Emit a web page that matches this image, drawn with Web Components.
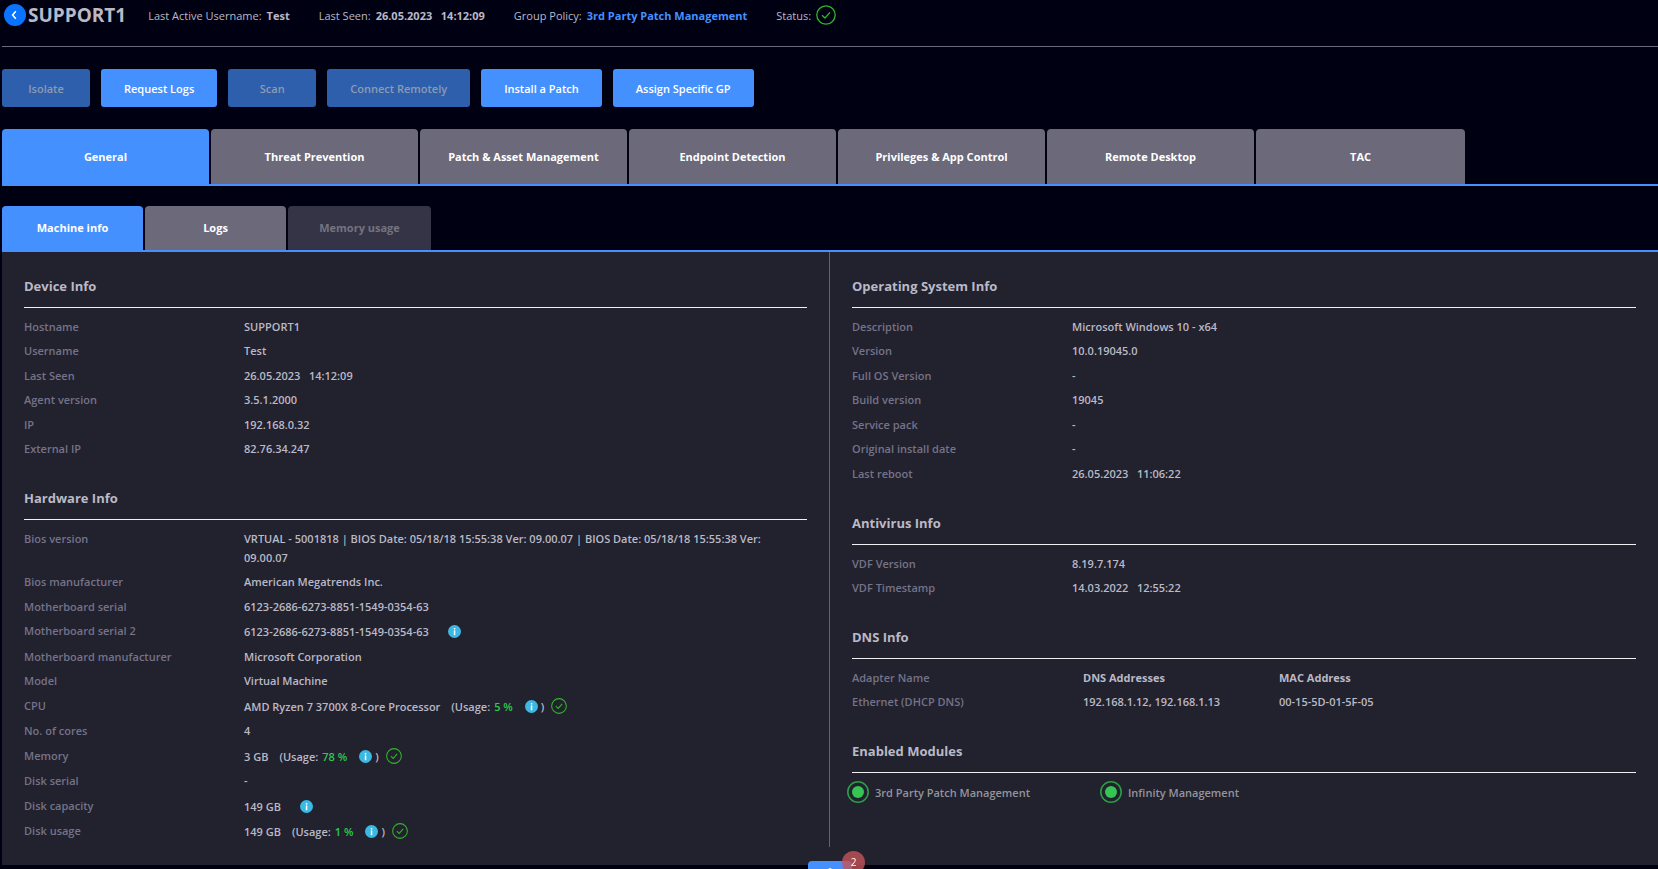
<!DOCTYPE html>
<html lang="en">
<head>
<meta charset="utf-8">
<title>SUPPORT1 - Machine info</title>
<style>
  body {
    margin: 0;
    background: #000013;
    color: #bab9c6;
    font: 11px/19px "Open Sans", "Noto Sans", sans-serif;
    --blue: #4590ff;
    --green: #2fc84f;
    --muted: #757388;
    --panel: #22212e;
    --tab: #6b697a;
  }
  a { color: var(--blue); font-weight: 700; text-decoration: none; }
</style>
</head>
<body>
<device-page>
  <device-header slot="header" name="SUPPORT1">
    <header-fact label="Last Active Username:">Test</header-fact>
    <header-fact label="Last Seen:">26.05.2023&nbsp; &nbsp;14:12:09</header-fact>
    <header-fact label="Group Policy:"><a href="#policy">3rd Party Patch Management</a></header-fact>
    <header-fact label="Status:"><check-icon size="20"></check-icon></header-fact>
  </device-header>

  <action-bar slot="actions">
    <action-button disabled>Isolate</action-button>
    <action-button>Request Logs</action-button>
    <action-button disabled>Scan</action-button>
    <action-button disabled>Connect Remotely</action-button>
    <action-button>Install a Patch</action-button>
    <action-button>Assign Specific GP</action-button>
  </action-bar>

  <tab-strip slot="tabs" label="Device sections" large>
    <tab-item large selected>General</tab-item>
    <tab-item large>Threat Prevention</tab-item>
    <tab-item large>Patch &amp; Asset Management</tab-item>
    <tab-item large>Endpoint Detection</tab-item>
    <tab-item large>Privileges &amp; App Control</tab-item>
    <tab-item large>Remote Desktop</tab-item>
    <tab-item large>TAC</tab-item>
  </tab-strip>

  <tab-strip slot="subtabs" label="General sections">
    <tab-item selected>Machine info</tab-item>
    <tab-item>Logs</tab-item>
    <tab-item disabled>Memory usage</tab-item>
  </tab-strip>

  <info-section slot="left" heading="Device Info">
    <info-row label="Hostname">SUPPORT1</info-row>
    <info-row label="Username">Test</info-row>
    <info-row label="Last Seen">26.05.2023&nbsp; &nbsp;14:12:09</info-row>
    <info-row label="Agent version">3.5.1.2000</info-row>
    <info-row label="IP">192.168.0.32</info-row>
    <info-row label="External IP">82.76.34.247</info-row>
  </info-section>
  <info-section slot="left" heading="Hardware Info">
    <info-row label="Bios version">VRTUAL - 5001818 | BIOS Date: 05/18/18 15:55:38 Ver: 09.00.07 | BIOS Date: 05/18/18 15:55:38 Ver: 09.00.07</info-row>
    <info-row label="Bios manufacturer">American Megatrends Inc.</info-row>
    <info-row label="Motherboard serial">6123-2686-6273-8851-1549-0354-63</info-row>
    <info-row label="Motherboard serial 2">6123-2686-6273-8851-1549-0354-63<info-icon slot="extra"></info-icon></info-row>
    <info-row label="Motherboard manufacturer">Microsoft Corporation</info-row>
    <info-row label="Model">Virtual Machine</info-row>
    <info-row label="CPU">AMD Ryzen 7 3700X 8-Core Processor<usage-note slot="extra">5 %</usage-note></info-row>
    <info-row label="No. of cores">4</info-row>
    <info-row label="Memory">3 GB<usage-note slot="extra">78 %</usage-note></info-row>
    <info-row label="Disk serial">-</info-row>
    <info-row label="Disk capacity">149 GB<info-icon slot="extra"></info-icon></info-row>
    <info-row label="Disk usage">149 GB<usage-note slot="extra">1 %</usage-note></info-row>
  </info-section>

  <info-section slot="right" heading="Operating System Info">
    <info-row label="Description">Microsoft Windows 10 - x64</info-row>
    <info-row label="Version">10.0.19045.0</info-row>
    <info-row label="Full OS Version">-</info-row>
    <info-row label="Build version">19045</info-row>
    <info-row label="Service pack">-</info-row>
    <info-row label="Original install date">-</info-row>
    <info-row label="Last reboot">26.05.2023&nbsp; &nbsp;11:06:22</info-row>
  </info-section>
  <info-section slot="right" heading="Antivirus Info">
    <info-row label="VDF Version">8.19.7.174</info-row>
    <info-row label="VDF Timestamp">14.03.2022&nbsp; &nbsp;12:55:22</info-row>
  </info-section>
  <info-section slot="right" heading="DNS Info">
    <dns-table></dns-table>
  </info-section>
  <info-section slot="right" heading="Enabled Modules">
    <module-list>
      <module-item>3rd Party Patch Management</module-item>
      <module-item>Infinity Management</module-item>
    </module-list>
  </info-section>

  <notice-tab slot="notice" count="2"></notice-tab>
</device-page>

<script>
  const define = (name, render) => customElements.define(name, class extends HTMLElement {
    constructor() {
      super();
      this.attachShadow({ mode: 'open' });
    }
    connectedCallback() {
      this.shadowRoot.innerHTML = render(this);
    }
  });

  define('device-page', () => `
    <style>
      :host { display: block; padding-left: 2px; }
      .columns {
        display: grid;
        grid-template-columns: 1fr 1fr;
        background: var(--panel);
        padding-bottom: 18px;
      }
      .column {
        display: flex;
        flex-direction: column;
        gap: 25px;
        box-sizing: border-box;
        padding: 25px 22px 0;
      }
      .column:first-child { border-right: 1px solid #62616f; }
    </style>
    <header><slot name="header"></slot></header>
    <slot name="actions"></slot>
    <slot name="tabs"></slot>
    <slot name="subtabs"></slot>
    <main class="columns">
      <div class="column"><slot name="left"></slot></div>
      <div class="column"><slot name="right"></slot></div>
    </main>
    <slot name="notice"></slot>`);

  define('device-header', el => `
    <style>
      :host {
        display: flex;
        align-items: center;
        box-sizing: border-box;
        height: 47px;
        padding: 0 0 16px 2px;
        border-bottom: 1px solid #6b697a;
      }
      button {
        display: flex;
        width: 22px;
        height: 22px;
        padding: 0;
        border: 0;
        border-radius: 50%;
        background: #0a74ff;
      }
      h1 { margin: 0 22px 0 2px; font-size: 19px; font-weight: 700; line-height: 24px; }
      .facts { display: flex; align-items: center; gap: 29px; }
    </style>
    <button type="button" aria-label="Back">
      <svg width="22" height="22" viewBox="0 0 22 22" fill="none" stroke="#fff" stroke-width="1.5"><path d="M11.8 7.3 8.6 11l3.2 3.7"/></svg>
    </button>
    <h1>${el.getAttribute('name')}</h1>
    <div class="facts"><slot></slot></div>`);

  define('header-fact', el => `
    <style>
      :host { display: flex; align-items: center; gap: 5px; white-space: nowrap; }
      b { display: flex; font-weight: 700; }
    </style>
    <span>${el.getAttribute('label')}</span><b><slot></slot></b>`);

  define('action-bar', () => `
    <style>:host { display: flex; gap: 11px; padding: 22px 0; }</style>
    <slot></slot>`);

  define('action-button', el => `
    <style>
      :host { display: block; }
      button {
        min-width: 88px;
        height: 38px;
        padding: 0 23px;
        border: 0;
        border-radius: 3px;
        background: var(--blue);
        color: #fff;
        font: inherit;
        font-weight: 600;
      }
      button:disabled { background: #2d5fad; color: #8f9ab0; }
    </style>
    <button type="button" ${el.hasAttribute('disabled') ? 'disabled' : ''}><slot></slot></button>`);

  define('tab-strip', el => `
    <style>
      :host { display: block; border-bottom: 2px solid var(--blue); }
      :host([large]) { margin-bottom: 20px; }
      nav { display: flex; gap: 2px; }
    </style>
    <nav role="tablist" aria-label="${el.getAttribute('label')}"><slot></slot></nav>`);

  define('tab-item', el => `
    <style>
      :host { display: block; }
      button {
        display: block;
        width: 141px;
        height: 44px;
        padding: 0 0 2px;
        border: 0;
        border-radius: 4px 4px 0 0;
        background: var(--tab);
        color: #fff;
        font: inherit;
        font-weight: 700;
      }
      :host([large]) button { width: 207px; height: 55px; padding: 0; }
      :host(:last-child) button { width: 143px; }
      :host([large]:last-child) button { width: 209px; }
      :host([selected]) button { background: var(--blue); }
      button:disabled { background: #343446; color: #74737f; }
    </style>
    <button type="button" role="tab" aria-selected="${el.hasAttribute('selected')}" ${el.hasAttribute('disabled') ? 'disabled' : ''}><slot></slot></button>`);

  define('info-section', el => `
    <style>
      :host { display: block; }
      h2 {
        margin: 0 0 9px;
        padding-bottom: 11px;
        border-bottom: 1px solid #f0f0f4;
        font-size: 13px;
        font-weight: 700;
        line-height: 19px;
      }
    </style>
    <section><h2>${el.getAttribute('heading')}</h2><slot></slot></section>`);

  define('info-row', el => `
    <style>
      :host { display: block; padding-bottom: 5px; font-weight: 600; }
      :host(:nth-child(even)), :host(:last-child) { padding-bottom: 6px; }
      dl { display: grid; grid-template-columns: 220px 1fr; margin: 0; }
      dt { color: var(--muted); }
      dd { display: flex; align-items: center; margin: 0; padding-right: 24px; }
    </style>
    <dl><dt>${el.getAttribute('label')}</dt><dd><span><slot></slot></span><slot name="extra"></slot></dd></dl>`);

  define('usage-note', () => `
    <style>
      :host { display: flex; align-items: center; height: 20px; margin-left: 11px; white-space: nowrap; }
      b { margin-left: 4px; color: var(--green); font-weight: 600; }
      .close { margin: 0 7px 0 3px; }
    </style>
    <span>(Usage:</span><b><slot></slot></b><info-icon near></info-icon><span class="close">)</span><check-icon size="16"></check-icon>`);

  define('info-icon', () => `
    <style>
      :host { display: flex; align-items: center; height: 20px; margin-left: 19px; }
      :host([near]) { margin-left: 12px; }
    </style>
    <svg width="13" height="13" viewBox="0 0 13 13" role="img" aria-label="Info">
      <circle cx="6.5" cy="6.5" r="6.5" fill="#3bb9e3"/>
      <rect x="5.8" y="3" width="1.5" height="1.5" fill="#fff"/>
      <rect x="5.8" y="5.4" width="1.5" height="4.8" fill="#fff"/>
    </svg>`);

  define('check-icon', el => `
    <style>:host { display: flex; }</style>
    <svg width="${el.getAttribute('size')}" height="${el.getAttribute('size')}" viewBox="0 0 20 20" fill="none" stroke="#2fb728" stroke-width="1.3" role="img" aria-label="OK">
      <circle cx="10" cy="10" r="9.2"/><path d="m6 10.2 3 2.8 5-5.6"/>
    </svg>`);

  define('dns-table', () => `
    <style>
      :host { display: block; }
      table { width: 100%; border-collapse: collapse; table-layout: fixed; font-weight: 600; }
      col:nth-child(1) { width: 231px; }
      col:nth-child(2) { width: 196px; }
      th, td { height: 19px; padding: 0 0 5px; text-align: left; font-weight: 600; }
      tbody th, tbody td { padding-bottom: 6px; }
      thead th { font-weight: 700; }
      th:first-child { color: var(--muted); font-weight: 600; }
    </style>
    <table>
      <colgroup><col><col><col></colgroup>
      <thead><tr><th scope="col">Adapter Name</th><th scope="col">DNS Addresses</th><th scope="col">MAC Address</th></tr></thead>
      <tbody><tr><th scope="row">Ethernet (DHCP DNS)</th><td>192.168.1.12, 192.168.1.13</td><td>00-15-5D-01-5F-05</td></tr></tbody>
    </table>`);

  define('module-list', () => `
    <style>:host { display: grid; grid-template-columns: 253px 1fr; margin: -1px 0 0 -5px; }</style>
    <slot></slot>`);

  define('module-item', () => `
    <style>
      :host { display: flex; align-items: center; gap: 6px; color: #94949b; font-weight: 600; }
      svg { flex: none; }
    </style>
    <svg width="22" height="22" viewBox="0 0 22 22" aria-hidden="true">
      <circle cx="11" cy="11" r="10.2" fill="none" stroke="#2a9d48" stroke-width="1.6"/>
      <circle cx="11" cy="11" r="6" fill="#36c553"/>
    </svg>
    <span><slot></slot></span>`);

  define('notice-tab', el => `
    <style>
      :host { position: fixed; bottom: 0; left: 50%; width: 44px; margin-left: -21px; }
      button {
        display: flex;
        justify-content: center;
        align-items: flex-end;
        width: 44px;
        height: 8px;
        padding: 0;
        border: 0;
        border-radius: 4px 4px 0 0;
        background: var(--blue);
      }
      .badge {
        position: absolute;
        right: -13px;
        bottom: -5px;
        width: 23px;
        height: 23px;
        border-radius: 50%;
        background: rgba(196, 84, 88, .8);
        color: #fff;
        font-size: 10px;
        line-height: 23px;
        text-align: center;
      }
    </style>
    <button type="button" aria-label="Open notifications"><svg width="4" height="1" viewBox="0 0 4 1"><path d="M0 1 2 0l2 1z" fill="#fff"/></svg></button>
    <span class="badge">${el.getAttribute('count')}</span>`);
</script>
</body>
</html>
